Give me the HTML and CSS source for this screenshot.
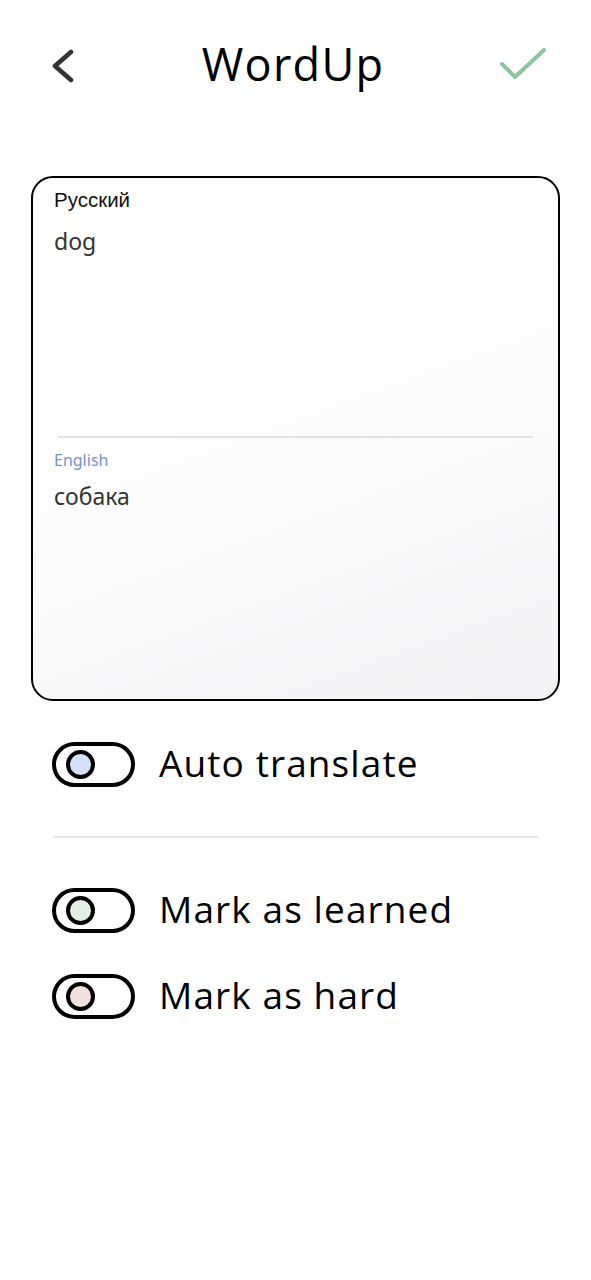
FILE: index.html
```html
<!DOCTYPE html>
<html lang="ru">
<head>
<meta charset="utf-8">
<title>WordUp</title>
<link rel="stylesheet" href="styles.css">
</head>
<body>
<div class="app">
  <header class="topbar">
    <button class="icon-btn back" aria-label="Back">
      <svg width="24" height="36" viewBox="0 0 24 36"><path d="M20 3 L4 17 L20 31" fill="none" stroke="#333" stroke-width="4.6" stroke-linecap="round" stroke-linejoin="round"/></svg>
    </button>
    <h1 class="title">WordUp</h1>
    <button class="icon-btn save" aria-label="Save">
      <svg width="50" height="36" viewBox="0 0 50 36"><path d="M3 16 L16 29 L45 2" fill="none" stroke="#8cc4a0" stroke-width="4" stroke-linecap="round" stroke-linejoin="round"/></svg>
    </button>
  </header>

  <section class="card">
    <div class="field source">
      <div class="lang lang-src">Русский</div>
      <div class="word">dog</div>
    </div>
    <div class="card-divider"></div>
    <div class="field target">
      <div class="lang lang-dst">English</div>
      <div class="word">собака</div>
    </div>
  </section>

  <div class="options">
    <div class="option">
      <span class="toggle"><span class="knob knob-blue"></span></span>
      <span class="opt-label">Auto translate</span>
    </div>
    <div class="opt-divider"></div>
    <div class="option">
      <span class="toggle"><span class="knob knob-green"></span></span>
      <span class="opt-label">Mark as learned</span>
    </div>
    <div class="option option-tight">
      <span class="toggle"><span class="knob knob-pink"></span></span>
      <span class="opt-label">Mark as hard</span>
    </div>
  </div>
</div>
</body>
</html>
```

FILE: styles.css
```css
* { box-sizing: border-box; }
html, body { margin: 0; padding: 0; background: #fff; }
body { font-family: "Noto Sans", sans-serif; color: #000; }

.app { width: 591px; min-height: 1280px; }

.topbar {
  display: flex;
  align-items: center;
  justify-content: space-between;
  height: 132px;
  padding: 0 42px 0 51px;
}
.icon-btn {
  background: none; border: 0; padding: 0; margin: 0;
  display: flex; align-items: center;
}
.back { width: 24px; height: 36px; margin-top: 2px; }
.save { width: 50px; height: 36px; margin-top: 0; }
.title {
  margin: 0 0 6px 0;
  font-family: "Open Sans", sans-serif;
  font-weight: 400;
  font-size: 45px;
  letter-spacing: 1.3px;
  line-height: 1;
  padding-left: 12px;
}

.card {
  margin: 44px 31px 0 31px;
  height: 525px;
  border: 2px solid #000;
  border-radius: 22px;
  background: linear-gradient(160deg, #ffffff 35%, #f3f3f5 100%);
  padding: 0 25px 0 21px;
  display: flex;
  flex-direction: column;
}
.field { display: flex; flex-direction: column; }
.source { height: 258px; padding-top: 10px; }
.target { padding-top: 10px; }
.lang-src {
  font-family: "Liberation Sans", Arial, sans-serif;
  font-size: 20.5px;
  color: #111;
  line-height: 24px;
}
.lang-dst {
  font-family: "Noto Sans", sans-serif;
  font-size: 16px;
  color: #7394cf;
  line-height: 24px;
}
.word {
  font-family: "Noto Sans", sans-serif;
  font-size: 23px;
  color: #333;
  margin-top: 15px;
  line-height: 28px;
}
.target .word { margin-top: 10px; }
.card-divider {
  height: 2px;
  background: #e2e2e2;
  margin-left: 4px;
}

.options { padding: 41px 53px 0 52px; }
.option {
  display: flex;
  align-items: center;
  gap: 24px;
  height: 45px;
}
.toggle {
  width: 83px; height: 45px;
  border: 4px solid #000;
  border-radius: 23px;
  display: flex; align-items: center;
  padding-left: 9.5px;
  flex: none;
}
.knob {
  width: 29px; height: 29px;
  border-radius: 50%;
  border: 4px solid #000;
}
.knob-blue { background: #d5e1fa; }
.knob-green { background: #e1efe4; }
.knob-pink { background: #f1e2df; }
.opt-label {
  font-family: "Open Sans", sans-serif;
  font-size: 37px;
  font-weight: 400;
  line-height: 1;
  letter-spacing: 1.1px;
  margin-top: -4px;
}
.opt-divider {
  height: 2px;
  background: #e6e6e6;
  margin: 49px 0 50px 1px;
}
.option-tight { margin-top: 41px; }
```
